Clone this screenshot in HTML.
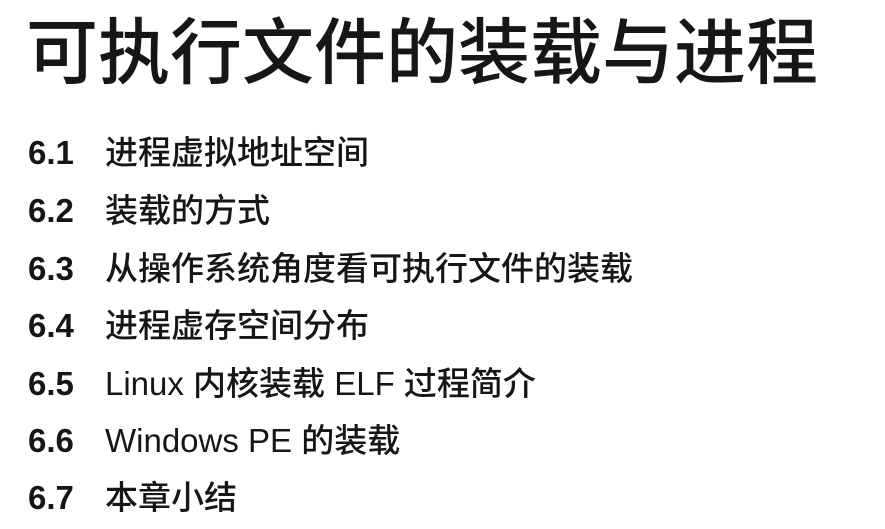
<!DOCTYPE html>
<html><head><meta charset="utf-8"><style>
body{margin:0;width:885px;height:529px;background:#fff;overflow:hidden;font-family:"Liberation Sans","Noto Sans CJK SC",sans-serif;color:#161616;position:relative}
.t{position:absolute;left:26px;top:4px;font-size:72px;font-weight:500;letter-spacing:0px;white-space:nowrap;line-height:100px}
.r{position:absolute;left:28px;font-size:33px;white-space:nowrap;line-height:40px;font-weight:500}
.r span{display:inline-block;width:77px;font-weight:700}
.l{font-weight:700}
</style></head><body>
<div class="t">可执行文件的装载与进程</div>
<div class="r" style="top:133px"><span>6.1</span>进程虚拟地址空间</div>
<div class="r" style="top:191px"><span>6.2</span>装载的方式</div>
<div class="r" style="top:249px"><span>6.3</span>从操作系统角度看可执行文件的装载</div>
<div class="r" style="top:306px"><span>6.4</span>进程虚存空间分布</div>
<div class="r" style="top:364px"><span>6.5</span><b class="l" style="font-weight:500">Linux</b> 内核装载 ELF 过程简介</div>
<div class="r" style="top:421px"><span>6.6</span>Windows PE 的装载</div>
<div class="r" style="top:478px"><span>6.7</span>本章小结</div>
</body></html>
